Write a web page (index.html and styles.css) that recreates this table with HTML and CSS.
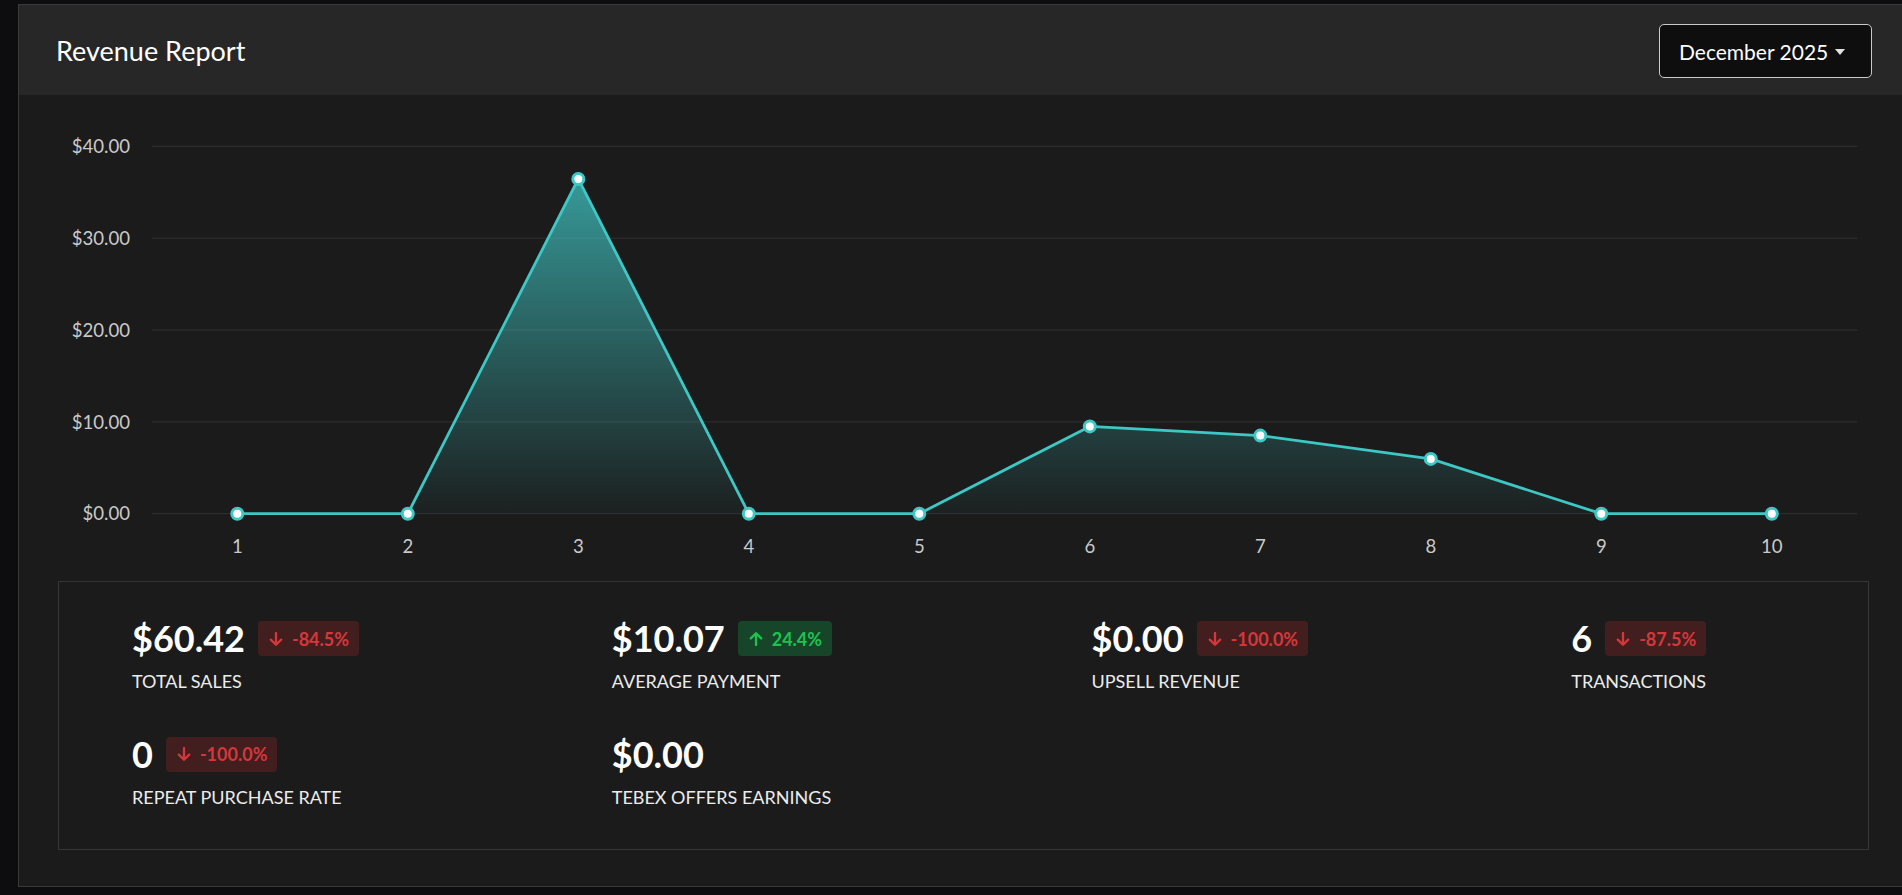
FILE: index.html
```html
<!DOCTYPE html>
<html lang="en">
<head>
<meta charset="utf-8">
<title>Revenue Report</title>
<link rel="stylesheet" href="styles.css">
</head>
<body>
<div class="page">
  <section class="card">
    <header class="card-header">
      <h1 class="title">Revenue Report</h1>
      <button class="month-select" type="button">
        <span>December 2025</span>
        <span class="caret"></span>
      </button>
    </header>
    <div class="card-body">
      <svg class="chart" width="1811" height="460" viewBox="0 0 1811 460" xmlns="http://www.w3.org/2000/svg">
        <defs>
          <linearGradient id="areaFill" gradientUnits="userSpaceOnUse" x1="0" y1="36.3" x2="0" y2="403.7">
            <stop offset="0" stop-color="#40c8c6" stop-opacity="0.8"/>
            <stop offset="1" stop-color="#40c8c6" stop-opacity="0.03"/>
          </linearGradient>
        </defs>
        <g class="grid">
          <line x1="94" y1="36.3" x2="1799" y2="36.3"/>
          <line x1="94" y1="128.2" x2="1799" y2="128.2"/>
          <line x1="94" y1="220" x2="1799" y2="220"/>
          <line x1="94" y1="311.9" x2="1799" y2="311.9"/>
          <line x1="94" y1="403.7" x2="1799" y2="403.7"/>
        </g>
        <g class="y-labels">
          <text x="72" y="43">$40.00</text>
          <text x="72" y="134.9">$30.00</text>
          <text x="72" y="226.7">$20.00</text>
          <text x="72" y="318.6">$10.00</text>
          <text x="72" y="410.4">$0.00</text>
        </g>
        <g class="x-labels">
          <text x="179.3" y="443">1</text>
          <text x="349.8" y="443">2</text>
          <text x="520.3" y="443">3</text>
          <text x="690.8" y="443">4</text>
          <text x="861.3" y="443">5</text>
          <text x="1031.8" y="443">6</text>
          <text x="1202.3" y="443">7</text>
          <text x="1372.8" y="443">8</text>
          <text x="1543.3" y="443">9</text>
          <text x="1713.8" y="443">10</text>
        </g>
        <path class="area" d="M179.3,403.7 L349.8,403.7 L520.3,68.9 L690.8,403.7 L861.3,403.7 L1031.8,316.4 L1202.3,325.6 L1372.8,348.9 L1543.3,403.7 L1713.8,403.7 Z"/>
        <polyline class="line" points="179.3,403.7 349.8,403.7 520.3,68.9 690.8,403.7 861.3,403.7 1031.8,316.4 1202.3,325.6 1372.8,348.9 1543.3,403.7 1713.8,403.7"/>
        <g class="points">
          <circle cx="179.3" cy="403.7" r="5.5"/>
          <circle cx="349.8" cy="403.7" r="5.5"/>
          <circle cx="520.3" cy="68.9" r="5.5"/>
          <circle cx="690.8" cy="403.7" r="5.5"/>
          <circle cx="861.3" cy="403.7" r="5.5"/>
          <circle cx="1031.8" cy="316.4" r="5.5"/>
          <circle cx="1202.3" cy="325.6" r="5.5"/>
          <circle cx="1372.8" cy="348.9" r="5.5"/>
          <circle cx="1543.3" cy="403.7" r="5.5"/>
          <circle cx="1713.8" cy="403.7" r="5.5"/>
        </g>
      </svg>

      <div class="stats">
        <div class="stat">
          <div class="stat-top">
            <span class="stat-value">$60.42</span>
            <span class="badge badge-down">
              <svg class="arrow" viewBox="0 0 14 14" width="14" height="14"><path d="M7 1 V12.6 M1.8 7.6 L7 12.8 L12.2 7.6"/></svg>
              <span>-84.5%</span>
            </span>
          </div>
          <div class="stat-label">TOTAL SALES</div>
        </div>
        <div class="stat">
          <div class="stat-top">
            <span class="stat-value">$10.07</span>
            <span class="badge badge-up">
              <svg class="arrow" viewBox="0 0 14 14" width="14" height="14"><path d="M7 13 V1.4 M1.8 6.4 L7 1.2 L12.2 6.4"/></svg>
              <span>24.4%</span>
            </span>
          </div>
          <div class="stat-label">AVERAGE PAYMENT</div>
        </div>
        <div class="stat">
          <div class="stat-top">
            <span class="stat-value">$0.00</span>
            <span class="badge badge-down">
              <svg class="arrow" viewBox="0 0 14 14" width="14" height="14"><path d="M7 1 V12.6 M1.8 7.6 L7 12.8 L12.2 7.6"/></svg>
              <span>-100.0%</span>
            </span>
          </div>
          <div class="stat-label">UPSELL REVENUE</div>
        </div>
        <div class="stat">
          <div class="stat-top">
            <span class="stat-value">6</span>
            <span class="badge badge-down">
              <svg class="arrow" viewBox="0 0 14 14" width="14" height="14"><path d="M7 1 V12.6 M1.8 7.6 L7 12.8 L12.2 7.6"/></svg>
              <span>-87.5%</span>
            </span>
          </div>
          <div class="stat-label">TRANSACTIONS</div>
        </div>
        <div class="stat">
          <div class="stat-top">
            <span class="stat-value">0</span>
            <span class="badge badge-down">
              <svg class="arrow" viewBox="0 0 14 14" width="14" height="14"><path d="M7 1 V12.6 M1.8 7.6 L7 12.8 L12.2 7.6"/></svg>
              <span>-100.0%</span>
            </span>
          </div>
          <div class="stat-label">REPEAT PURCHASE RATE</div>
        </div>
        <div class="stat">
          <div class="stat-top">
            <span class="stat-value">$0.00</span>
          </div>
          <div class="stat-label">TEBEX OFFERS EARNINGS</div>
        </div>
      </div>
    </div>
  </section>
</div>
</body>
</html>
```

FILE: styles.css
```css
html, body {
  margin: 0;
  padding: 0;
  background: #0d0d0f;
  overflow: hidden;
}

body {
  font-family: Lato, "Open Sans", "Liberation Sans", sans-serif;
  color: #ffffff;
  width: 1902px;
  height: 895px;
}

.page {
  padding: 4px 0 0 18px;
}

.card {
  border: 1px solid #3a3a3a;
  border-right: none;
  background: #1b1b1b;
}

.card-header {
  height: 90px;
  background: #272727;
  display: flex;
  align-items: center;
  justify-content: space-between;
  padding: 0 30px 0 37px;
}

.title {
  margin: 0;
  font-size: 27px;
  font-weight: 400;
  color: #ffffff;
  line-height: 1;
}

.month-select {
  box-sizing: border-box;
  width: 213px;
  height: 54px;
  margin-top: 2px;
  background: #0e0e0e;
  border: 1px solid #c9c9c9;
  border-radius: 5px;
  color: #ffffff;
  font-family: Lato, "Open Sans", sans-serif;
  font-size: 21px;
  display: flex;
  align-items: center;
  gap: 7px;
  padding: 0 18px 0 19px;
}

.caret {
  width: 0;
  height: 0;
  border-left: 5.5px solid transparent;
  border-right: 5.5px solid transparent;
  border-top: 6px solid #e2e2e2;
  margin-top: 1px;
}

.card-body {
  padding: 15px 33px 36px 39px;
}

.chart {
  display: block;
  font-family: Lato, "Open Sans", sans-serif;
}

.grid line {
  stroke: #323232;
  stroke-width: 1;
}

.y-labels text {
  fill: #c9c9c9;
  font-size: 18.6px;
  text-anchor: end;
}

.x-labels text {
  fill: #c9c9c9;
  font-size: 18.6px;
  text-anchor: middle;
}

.area {
  fill: url(#areaFill);
}

.line {
  fill: none;
  stroke: #3ec8c5;
  stroke-width: 2.8;
  stroke-linejoin: round;
}

.points circle {
  fill: #ffffff;
  stroke: #3ec8c5;
  stroke-width: 3;
}

.stats {
  margin-top: 11px;
  border: 1px solid #363636;
  padding: 35px 73px 41px 73px;
  display: grid;
  grid-template-columns: repeat(4, minmax(0, 1fr));
  column-gap: 256px;
  row-gap: 40px;
}

.stat {
  display: flex;
  flex-direction: column;
  gap: 11px;
  white-space: nowrap;
}

.stat-top {
  display: flex;
  align-items: center;
  gap: 13px;
  height: 43px;
}

.stat-value {
  font-size: 36px;
  font-weight: 700;
  line-height: 1.2;
  color: #ffffff;
}

.stat-label {
  font-size: 18px;
  line-height: 1.2;
  color: #ececec;
}

.badge {
  display: inline-flex;
  align-items: center;
  gap: 9px;
  height: 35px;
  padding: 0 10px 0 11px;
  border-radius: 4px;
  font-size: 18px;
  font-weight: 700;
}

.badge-down {
  background: #431e1f;
  color: #d3383b;
}

.badge-up {
  background: #17452a;
  color: #1fc24f;
}

.arrow {
  display: block;
}

.arrow path {
  fill: none;
  stroke: currentColor;
  stroke-width: 2.3;
  stroke-linecap: round;
  stroke-linejoin: round;
}
```
